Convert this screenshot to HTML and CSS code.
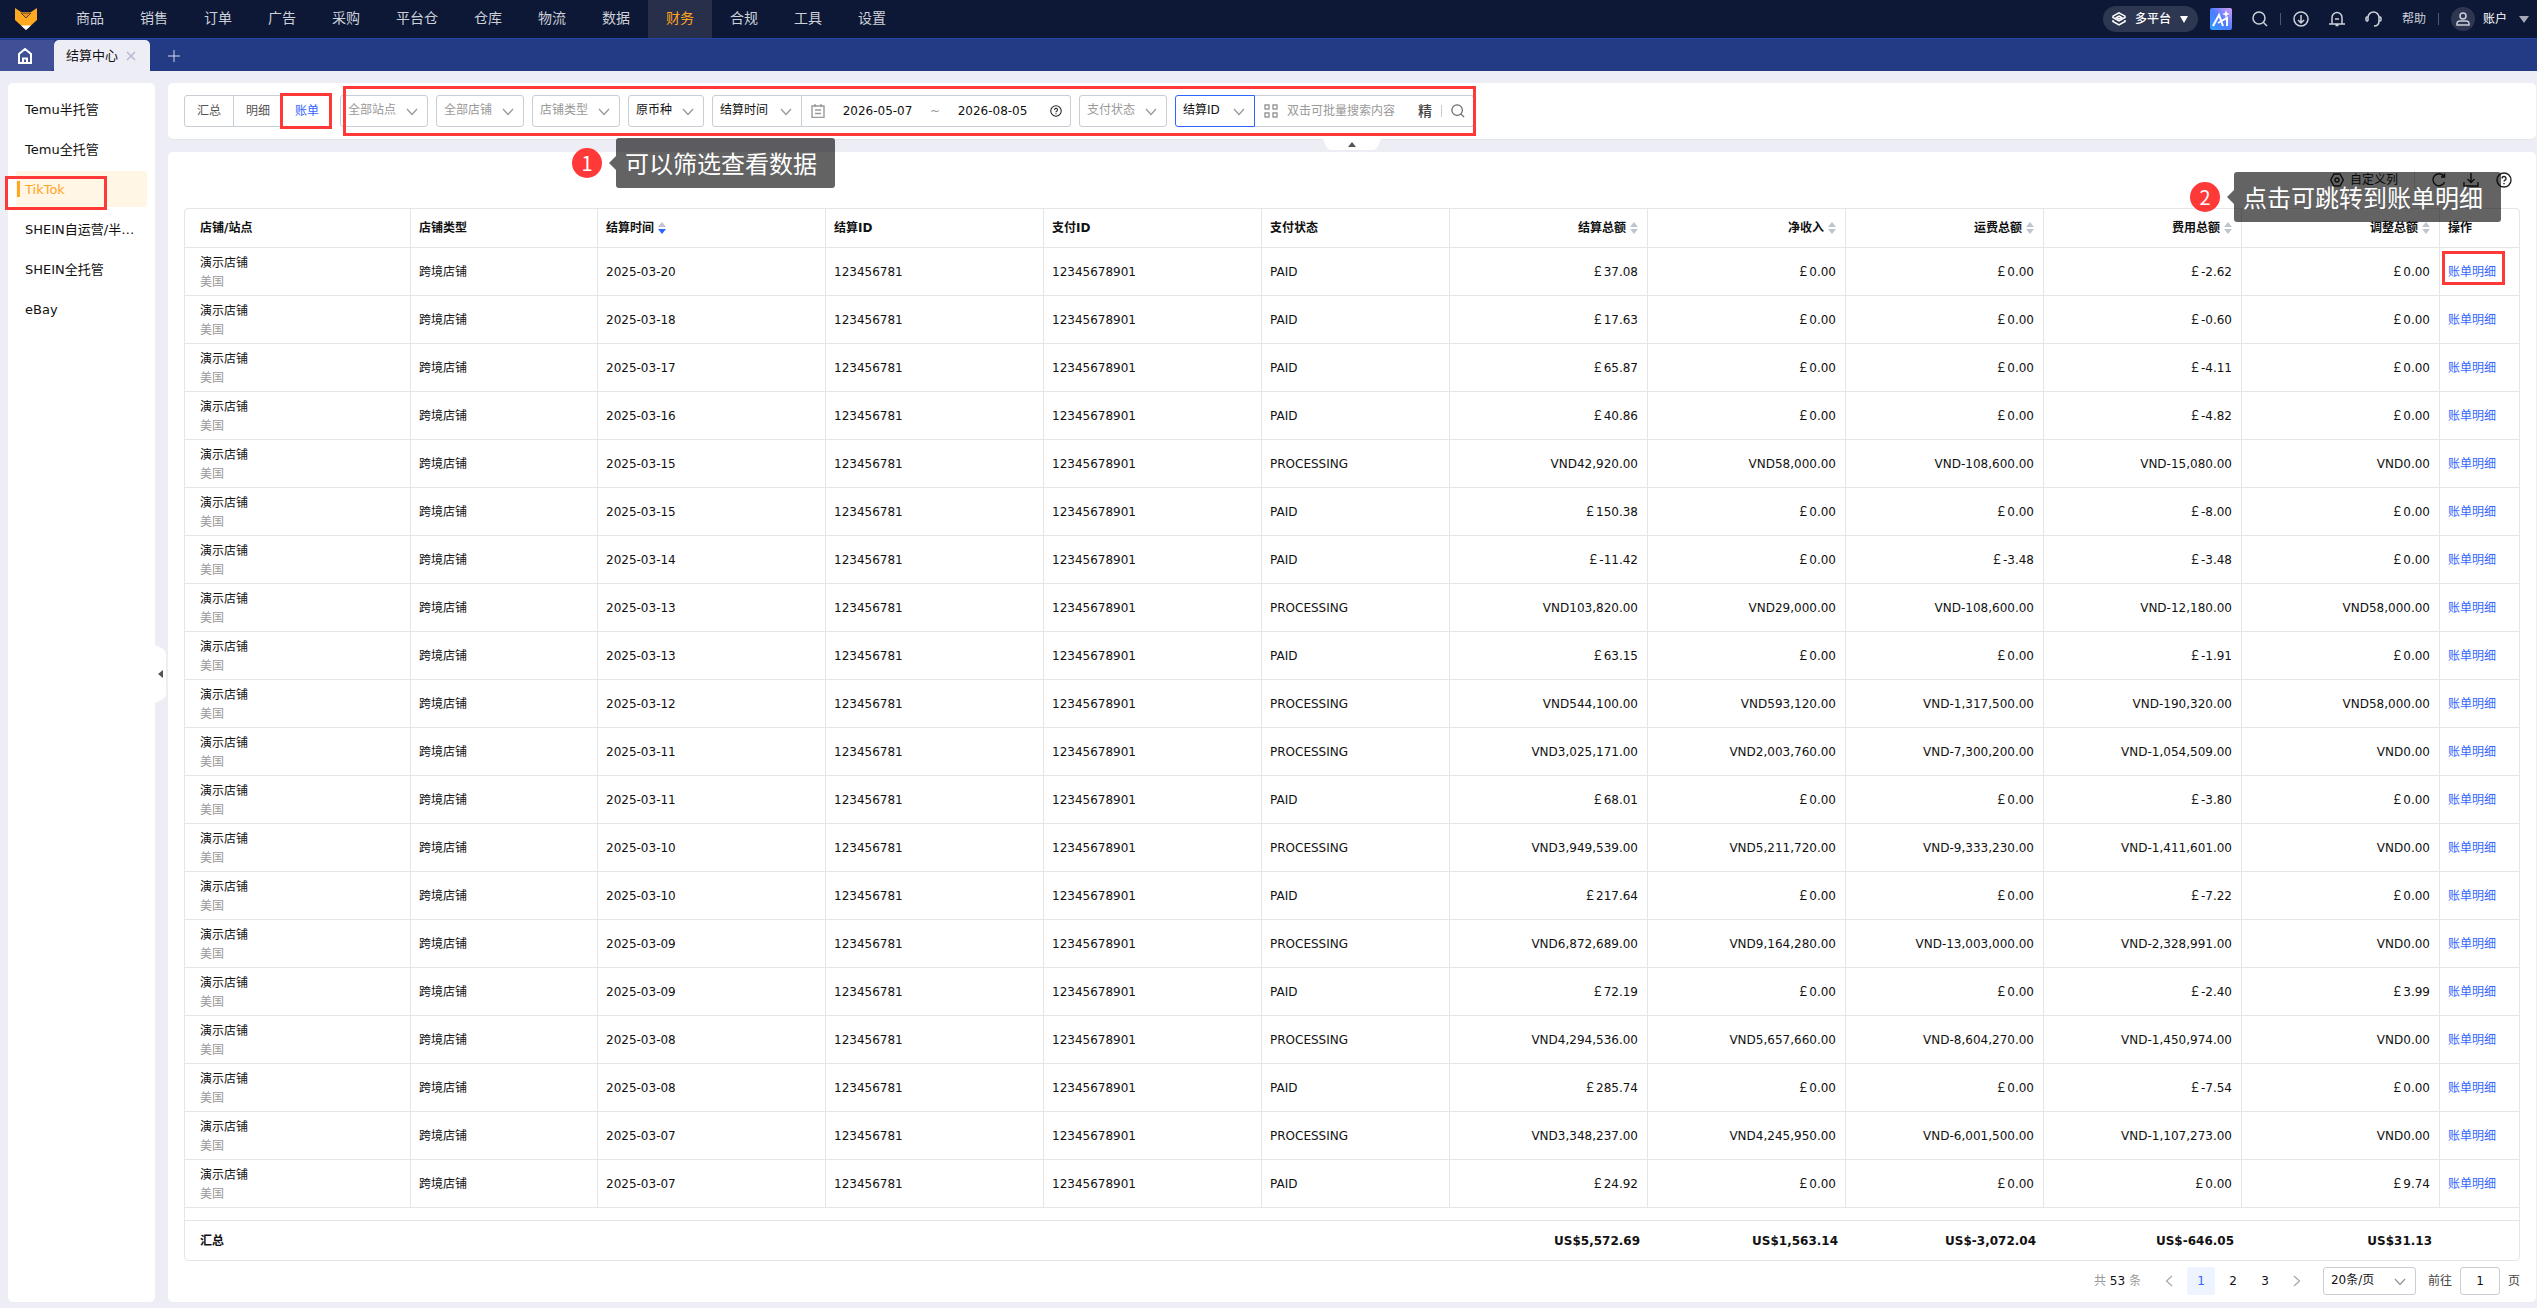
FILE: index.html
```html
<!DOCTYPE html>
<html lang="zh-CN">
<head>
    <meta charset="UTF-8">
    <meta name="viewport" content="width=device-width, initial-scale=1.0">
    <title>结算中心</title>
    <link rel="stylesheet" href="styles.css">
</head>
<body>
    <svg class="sprite" aria-hidden="true">
        <symbol id="chevron" viewBox="0 0 12 12"><path d="M1 3l5 5.500L11 3"/></symbol>
        <symbol id="search" viewBox="0 0 16 16"><circle cx="7" cy="7" r="6"/><path d="M11.500 11.500L15 15"/></symbol>
        <symbol id="help" viewBox="0 0 16 16"><circle cx="8" cy="8" r="7"/><path d="M6 6.500a2 2 0 1 1 2.800 1.800c-.6.300-.8.600-.8 1.200M8 11v1.300"/></symbol>
    </svg>

    <header class="topbar">
        <a class="logo" href="#" aria-label="首页">
            <svg width="22" height="22" viewBox="0 0 22 22">
                <path d="M0 0l6 4h10l6-4v12L11 22 0 12z" fill="#ffa920"/>
                <path d="M6 17.500h10L11 22z" fill="#fff"/>
                <path d="M6 5l5 5 5-5z" fill="#e8941a" stroke="#5b4426" stroke-width="1"/>
            </svg>
        </a>
        <nav class="nav">
            <a href="#">商品</a>
            <a href="#">销售</a>
            <a href="#">订单</a>
            <a href="#">广告</a>
            <a href="#">采购</a>
            <a href="#">平台仓</a>
            <a href="#">仓库</a>
            <a href="#">物流</a>
            <a href="#">数据</a>
            <a href="#" class="active">财务</a>
            <a href="#">合规</a>
            <a href="#">工具</a>
            <a href="#">设置</a>
        </nav>
        <div class="tools">
            <button class="platform">
                <svg class="line" width="14" height="14" viewBox="0 0 14 14"><path d="M7 .8l6 3.400v1.300L7 9 1 5.500V4.200zM7 4l2.500 1.400L7 6.800 4.500 5.400zM1 8v1.500L7 13l6-3.500V8"/></svg>
                多平台
                <i class="caret"></i>
            </button>
            <button class="ai" aria-label="AI">
                <svg width="22" height="22" viewBox="0 0 22 22">
                    <defs>
                        <linearGradient id="aiBg" x1="0" y1="1" x2="1" y2="0">
                            <stop offset="0" stop-color="#2fa0ff"/>
                            <stop offset=".5" stop-color="#4f7bff"/>
                            <stop offset="1" stop-color="#d99cf5"/>
                        </linearGradient>
                    </defs>
                    <rect width="22" height="22" rx="2" fill="url(#aiBg)"/>
                    <path d="M3 18L9 7l4 11M8 15l9-5v8" fill="none" stroke="#fff" stroke-width="2"/>
                    <path d="M16 2l1 3 3 1-3 1-1 3-1-3-3-1 3-1z" fill="#fff"/>
                </svg>
            </button>
            <button aria-label="搜索"><svg class="line" width="16" height="16"><use href="#search"/></svg></button>
            <i class="split"></i>
            <button aria-label="下载"><svg class="line" width="16" height="16" viewBox="0 0 16 16"><circle cx="8" cy="8" r="7"/><path d="M8 4v8M5 9l3 3 3-3"/></svg></button>
            <button aria-label="通知"><svg class="line" width="16" height="16" viewBox="0 0 16 16"><path d="M0 13h16M3 13V6.500a5 5 0 0 1 10 0V13M6 8h4M6.500 14.500h3"/></svg></button>
            <button aria-label="客服"><svg class="line" width="17" height="16" viewBox="0 0 17 16"><path d="M3 10V6.500a5.500 5.500 0 0 1 11 0V10c0 3-2 5-5 5M3 6H2a1 1 0 0 0-1 1v2a1 1 0 0 0 1 1h1M14 6h1a1 1 0 0 1 1 1v2a1 1 0 0 1-1 1h-1"/></svg></button>
            <a href="#" class="help-link">帮助</a>
            <i class="split"></i>
            <button class="account">
                <span class="avatar"><svg class="line" width="14" height="14" viewBox="0 0 14 14"><circle cx="7" cy="4" r="3"/><path d="M1 13v-1.500a2.500 2.500 0 0 1 2.500-2.500h7a2.500 2.500 0 0 1 2.500 2.500V13z"/></svg></span>
                账户
                <i class="caret"></i>
            </button>
        </div>
    </header>

    <div class="tabbar">
        <button class="home" aria-label="主页"><svg width="14" height="16" viewBox="0 0 14 16"><path d="M1 15V6l6-5 6 5v9zM5 15v-4.500h4V15"/></svg></button>
        <div class="tab">结算中心
            <button aria-label="关闭"><svg width="10" height="10" viewBox="0 0 10 10"><path d="M1 1l8 8M9 1L1 9"/></svg></button>
        </div>
        <button class="add" aria-label="新增"><svg width="12" height="12" viewBox="0 0 12 12"><path d="M6 0v12M0 6h12"/></svg></button>
    </div>

    <div class="layout">
        <aside class="sidebar">
            <a href="#">Temu半托管</a>
            <a href="#">Temu全托管</a>
            <a href="#" class="active">TikTok<span class="mark mark-menu"></span></a>
            <a href="#">SHEIN自运营/半托管</a>
            <a href="#">SHEIN全托管</a>
            <a href="#">eBay</a>
            <button class="fold-side" aria-label="收起菜单">
                <svg width="11" height="58" viewBox="0 0 11 58"><path d="M0 0l8 4q3 2 3 5v40q0 3-3 5l-8 4z" fill="#fff"/><path d="M8 25v8l-5-4z" fill="#555"/></svg>
            </button>
        </aside>

        <main class="content">
            <section class="card filter-card">
                <div class="segment">
                    <button>汇总</button>
                    <button>明细</button>
                    <button class="active">账单<span class="mark mark-segment"></span></button>
                </div>
                <div class="filters">
                    <div class="select"><select class="empty" aria-label="站点"><option>全部站点</option></select><svg><use href="#chevron"/></svg></div>
                    <div class="select"><select class="empty" aria-label="店铺"><option>全部店铺</option></select><svg><use href="#chevron"/></svg></div>
                    <div class="select"><select class="empty" aria-label="店铺类型"><option>店铺类型</option></select><svg><use href="#chevron"/></svg></div>
                    <div class="select currency"><select aria-label="币种"><option>原币种</option></select><svg><use href="#chevron"/></svg></div>
                    <div class="group">
                        <div class="select time-type"><select aria-label="时间类型"><option>结算时间</option></select><svg><use href="#chevron"/></svg></div>
                        <div class="field dates">
                            <svg class="icon" width="14" height="14" viewBox="0 0 14 14"><path d="M1 2h12v11.400H1zM4 0v3M10 0v3M4 6h6M4 9.500h6"/></svg>
                            <input type="text" value="2026-05-07" aria-label="开始日期">
                            <span>~</span>
                            <input type="text" value="2026-08-05" aria-label="结束日期">
                            <svg class="icon dark" width="12" height="12"><use href="#help"/></svg>
                        </div>
                    </div>
                    <div class="select"><select class="empty" aria-label="支付状态"><option>支付状态</option></select><svg><use href="#chevron"/></svg></div>
                    <div class="group">
                        <div class="select id-type"><select aria-label="搜索类型"><option>结算ID</option></select><svg><use href="#chevron"/></svg></div>
                        <div class="field search">
                            <svg class="icon" width="14" height="14" viewBox="0 0 14 14"><path d="M1 1h4v4H1zM9 1h4v4H9zM1 9h4v4H1zM9 9h4v4H9z"/></svg>
                            <input type="text" placeholder="双击可批量搜索内容" aria-label="搜索内容">
                            <button class="exact">精</button>
                            <i></i>
                            <button aria-label="搜索"><svg class="icon gray" width="14" height="14"><use href="#search"/></svg></button>
                        </div>
                    </div>
                    <span class="mark mark-filters"></span>
                    <div class="note note-filter"><b>1</b><p>可以筛选查看数据</p></div>
                </div>
                <button class="fold-top" aria-label="收起筛选">
                    <svg width="58" height="12" viewBox="0 0 58 12"><path d="M0 0l3 7q2 4 5 4h42q3 0 5-4l3-7z" fill="#fff"/><path d="M25 8h8l-4-5z" fill="#555"/></svg>
                </button>
            </section>

            <section class="card table-card">
                <div class="toolbar">
                    <button class="columns"><svg class="icon dark" width="14" height="14" viewBox="0 0 14 14"><path d="M4 1h6l3.300 6L10 13H4L.7 7z"/><circle cx="7" cy="7" r="2"/></svg>自定义列</button>
                    <button aria-label="刷新"><svg class="icon dark" width="14" height="14" viewBox="0 0 14 14"><path d="M12.500 9A6 6 0 1 1 12 3.500M12.500 .5v3.500H9"/></svg></button>
                    <button aria-label="导出"><svg class="icon dark" width="16" height="16" viewBox="0 0 16 16"><path d="M8 1v9M4.500 7L8 10.500 11.500 7M1 10v4h14v-4"/></svg></button>
                    <button aria-label="帮助"><svg class="icon dark" width="16" height="16"><use href="#help"/></svg></button>
                    <div class="note note-detail"><b>2</b><p>点击可跳转到账单明细</p></div>
                </div>

                <div class="table-wrap">
                    <table>
                        <colgroup>
                            <col class="w-shop"><col class="w-type"><col class="w-time"><col class="w-id"><col class="w-id"><col class="w-status">
                            <col class="w-num"><col class="w-num"><col class="w-num"><col class="w-num"><col class="w-num"><col class="w-op">
                        </colgroup>
                        <thead>
                            <tr>
                                <th>店铺/站点</th>
                                <th>店铺类型</th>
                                <th>结算时间<i class="sort desc"></i></th>
                                <th>结算ID</th>
                                <th>支付ID</th>
                                <th>支付状态</th>
                                <th class="num">结算总额<i class="sort"></i></th>
                                <th class="num">净收入<i class="sort"></i></th>
                                <th class="num">运费总额<i class="sort"></i></th>
                                <th class="num">费用总额<i class="sort"></i></th>
                                <th class="num">调整总额<i class="sort"></i></th>
                                <th>操作</th>
                            </tr>
                        </thead>
                        <tbody id="rows"></tbody>
                        <tfoot>
                            <tr class="spacer"><td colspan="12"></td></tr>
                            <tr class="total">
                                <td colspan="6">汇总</td>
                                <td class="num">US$5,572.69</td>
                                <td class="num">US$1,563.14</td>
                                <td class="num">US$-3,072.04</td>
                                <td class="num">US$-646.05</td>
                                <td class="num">US$31.13</td>
                                <td></td>
                            </tr>
                        </tfoot>
                    </table>
                </div>

                <div class="pager">
                    <span class="count">共 <b>53</b> 条</span>
                    <button class="arrow prev" aria-label="上一页"><svg width="12" height="12"><use href="#chevron"/></svg></button>
                    <button class="active">1</button>
                    <button>2</button>
                    <button>3</button>
                    <button class="arrow next" aria-label="下一页"><svg width="12" height="12"><use href="#chevron"/></svg></button>
                    <div class="select size"><select aria-label="每页条数"><option>20条/页</option></select><svg><use href="#chevron"/></svg></div>
                    <label class="jump">前往 <input type="text" value="1"> 页</label>
                </div>
            </section>
        </main>
    </div>

    <script>
        // date, status, settlement, net income, shipping, fee, adjustment
        const rows = [
            ['2025-03-20', 'PAID', '￡37.08', '￡0.00', '￡0.00', '￡-2.62', '￡0.00'],
            ['2025-03-18', 'PAID', '￡17.63', '￡0.00', '￡0.00', '￡-0.60', '￡0.00'],
            ['2025-03-17', 'PAID', '￡65.87', '￡0.00', '￡0.00', '￡-4.11', '￡0.00'],
            ['2025-03-16', 'PAID', '￡40.86', '￡0.00', '￡0.00', '￡-4.82', '￡0.00'],
            ['2025-03-15', 'PROCESSING', 'VND42,920.00', 'VND58,000.00', 'VND-108,600.00', 'VND-15,080.00', 'VND0.00'],
            ['2025-03-15', 'PAID', '￡150.38', '￡0.00', '￡0.00', '￡-8.00', '￡0.00'],
            ['2025-03-14', 'PAID', '￡-11.42', '￡0.00', '￡-3.48', '￡-3.48', '￡0.00'],
            ['2025-03-13', 'PROCESSING', 'VND103,820.00', 'VND29,000.00', 'VND-108,600.00', 'VND-12,180.00', 'VND58,000.00'],
            ['2025-03-13', 'PAID', '￡63.15', '￡0.00', '￡0.00', '￡-1.91', '￡0.00'],
            ['2025-03-12', 'PROCESSING', 'VND544,100.00', 'VND593,120.00', 'VND-1,317,500.00', 'VND-190,320.00', 'VND58,000.00'],
            ['2025-03-11', 'PROCESSING', 'VND3,025,171.00', 'VND2,003,760.00', 'VND-7,300,200.00', 'VND-1,054,509.00', 'VND0.00'],
            ['2025-03-11', 'PAID', '￡68.01', '￡0.00', '￡0.00', '￡-3.80', '￡0.00'],
            ['2025-03-10', 'PROCESSING', 'VND3,949,539.00', 'VND5,211,720.00', 'VND-9,333,230.00', 'VND-1,411,601.00', 'VND0.00'],
            ['2025-03-10', 'PAID', '￡217.64', '￡0.00', '￡0.00', '￡-7.22', '￡0.00'],
            ['2025-03-09', 'PROCESSING', 'VND6,872,689.00', 'VND9,164,280.00', 'VND-13,003,000.00', 'VND-2,328,991.00', 'VND0.00'],
            ['2025-03-09', 'PAID', '￡72.19', '￡0.00', '￡0.00', '￡-2.40', '￡3.99'],
            ['2025-03-08', 'PROCESSING', 'VND4,294,536.00', 'VND5,657,660.00', 'VND-8,604,270.00', 'VND-1,450,974.00', 'VND0.00'],
            ['2025-03-08', 'PAID', '￡285.74', '￡0.00', '￡0.00', '￡-7.54', '￡0.00'],
            ['2025-03-07', 'PROCESSING', 'VND3,348,237.00', 'VND4,245,950.00', 'VND-6,001,500.00', 'VND-1,107,273.00', 'VND0.00'],
            ['2025-03-07', 'PAID', '￡24.92', '￡0.00', '￡0.00', '￡0.00', '￡9.74']
        ];

        document.getElementById('rows').innerHTML = rows.map((row, i) => {
            const [date, status, ...amounts] = row;
            return `<tr>
                <td class="shop">演示店铺<small>美国</small></td>
                <td>跨境店铺</td>
                <td>${date}</td>
                <td>123456781</td>
                <td>12345678901</td>
                <td>${status}</td>
                ${amounts.map(a => `<td class="num">${a}</td>`).join('')}
                <td class="op"><a href="#">账单明细${i === 0 ? '<span class="mark mark-detail"></span>' : ''}</a></td>
            </tr>`;
        }).join('');
    </script>
</body>
</html>
```
FILE: styles.css
```css
* {
    box-sizing: border-box;
}
body {
    margin: 0;
    min-height: 100vh;
    display: flex;
    flex-direction: column;
    background: #ededf6;
    color: #111;
    font-family: "DejaVu Sans", "Noto Sans CJK SC", sans-serif;
    font-size: 12px;
    line-height: 18px;
}
a {
    color: inherit;
    text-decoration: none;
}
button, input, select {
    font: inherit;
    color: inherit;
    background: none;
    border: 0;
    padding: 0;
    margin: 0;
    outline: none;
}
button {
    cursor: pointer;
}
svg {
    display: block;
    flex: none;
}
.sprite {
    display: none;
}

/* top bar */
.topbar {
    display: flex;
    height: 39px;
    background: #0c1836;
    border-bottom: 1px solid #2645a6;
    color: #ced1d9;
}
.logo {
    width: 58px;
    padding: 8px 0 0 15px;
}
.nav {
    display: flex;
}
.nav a {
    padding: 0 18px;
    font-size: 14px;
    line-height: 36px;
}
.nav a.active {
    background: #272f4b;
    color: #ffa51f;
}
.tools {
    margin-left: auto;
    padding-right: 8px;
    display: flex;
    align-items: center;
    gap: 20px;
}
.line {
    fill: none;
    stroke: currentColor;
    stroke-width: 1.5;
}
.platform {
    display: flex;
    align-items: center;
    gap: 9px;
    height: 26px;
    padding: 0 10px 0 9px;
    margin-right: -8px;
    border-radius: 13px;
    background: #2e3751;
    color: #fff;
    font-weight: 500;
}
.caret {
    border: 4px solid transparent;
    border-top: 7px solid currentColor;
    border-bottom: 0;
}
.split {
    width: 1px;
    height: 12px;
    margin: 0 -8px;
    background: #4f586f;
}
.account {
    display: flex;
    align-items: center;
    gap: 8px;
    color: #fff;
}
.account .caret {
    border-width: 7px 5px 0;
    margin-left: 4px;
    color: #a3a8b4;
}
.avatar {
    display: flex;
    align-items: center;
    justify-content: center;
    width: 24px;
    height: 24px;
    border-radius: 50%;
    background: #2e3751;
    color: #ced1d9;
}

/* page tabs */
.tabbar {
    display: flex;
    height: 32px;
    padding-top: 1px;
    background: #233a85;
}
.tabbar svg {
    fill: none;
    stroke: currentColor;
}
.home {
    display: flex;
    justify-content: center;
    align-items: center;
    width: 54px;
    padding-right: 4px;
    border-radius: 0 0 4px 0;
    background: #3f5097;
    color: #fff;
    stroke-width: 2;
}
.tab {
    display: flex;
    align-items: center;
    gap: 8px;
    width: 96px;
    padding-left: 12px;
    border-radius: 5px 5px 0 0;
    background: #ededf6;
    font-size: 13px;
}
.tab button {
    color: #b4bbd0;
    stroke-width: 1.5;
}
.add {
    padding: 0 18px;
    color: #d5daea;
}

/* sidebar */
.layout {
    flex: 1;
    display: flex;
    gap: 13px;
    padding: 12px 1px 6px 8px;
}
.sidebar {
    position: relative;
    width: 147px;
    padding: 8px;
    border-radius: 5px;
    background: #fff;
    font-size: 13px;
}
.sidebar a {
    position: relative;
    display: block;
    height: 36px;
    margin-bottom: 4px;
    padding: 0 9px;
    line-height: 37px;
    white-space: nowrap;
    overflow: hidden;
    text-overflow: ellipsis;
}
.sidebar a.active {
    overflow: visible;
    border-radius: 3px;
    background: #fff6e5;
    color: #ffa51f;
}
.sidebar a.active::before {
    content: "";
    position: absolute;
    left: 1px;
    top: 10px;
    width: 3px;
    height: 16px;
    background: #ffa51f;
}
.fold-side {
    position: absolute;
    left: 100%;
    top: 50%;
    margin-top: -48px;
}

/* content cards */
.content {
    flex: 1;
    min-width: 0;
    display: flex;
    flex-direction: column;
    gap: 13px;
}
.card {
    position: relative;
    padding: 0 16px;
    border-radius: 5px;
    background: #fff;
}
.filter-card {
    display: flex;
    align-items: center;
    gap: 8px;
    height: 56px;
    box-shadow: 0 1px 0 #e3e4eb;
    z-index: 1;
}
.fold-top {
    position: absolute;
    left: 50%;
    top: 100%;
    margin-left: -29px;
}
.segment {
    display: flex;
    height: 32px;
    border: 1px solid #c9cdd4;
    border-radius: 3px;
    color: #555;
}
.segment button {
    position: relative;
    width: 49px;
    border-right: 1px solid #c9cdd4;
}
.segment button.active {
    width: 48px;
    border-right: 0;
    box-shadow: -1px 0 0 #3366ff;
    color: #3366ff;
}
.filters {
    position: relative;
    display: flex;
    gap: 8px;
}
.group {
    display: flex;
}
.select {
    position: relative;
    width: 88px;
    height: 32px;
}
.select select {
    appearance: none;
    width: 100%;
    height: 100%;
    padding: 0 24px 2px 7px;
    border: 1px solid #c9cdd4;
    border-radius: 3px;
}
.select select.empty {
    color: #999;
}
.select svg {
    position: absolute;
    right: 10px;
    top: 50%;
    width: 12px;
    height: 12px;
    margin-top: -5px;
    fill: none;
    stroke: #999;
    stroke-width: 1.3;
    pointer-events: none;
}
.currency {
    width: 76px;
}
.time-type {
    width: 90px;
}
.group .select select {
    border-radius: 3px 0 0 3px;
}
.id-type {
    width: 80px;
}
.group .id-type select {
    border-color: #2d66ff;
}
.field {
    display: flex;
    align-items: center;
    height: 32px;
    border: 1px solid #c9cdd4;
    border-left: 0;
    border-radius: 0 3px 3px 0;
}
.icon {
    fill: none;
    stroke: #999;
    stroke-width: 1.4;
}
.icon.dark {
    stroke: #222;
}
.icon.gray {
    stroke: #666;
}
.dates {
    width: 269px;
    padding: 0 8px 0 9px;
}
.dates input {
    width: 105px;
    text-align: center;
}
.dates span {
    width: 10px;
    color: #999;
}
.dates .dark {
    margin-left: auto;
}
.search {
    width: 219px;
    padding: 0 8px 0 9px;
}
.search input {
    flex: 1;
    min-width: 0;
    padding-left: 9px;
}
.search input::placeholder {
    color: #999;
}
.search .exact {
    font-size: 14px;
    font-weight: 500;
    color: #444;
}
.search i {
    width: 1px;
    height: 12px;
    margin: 0 9px;
    background: #ccc;
}

/* table */
.table-card {
    flex: 1;
}
.toolbar {
    position: relative;
    display: flex;
    justify-content: flex-end;
    align-items: center;
    gap: 17px;
    height: 56px;
    padding-right: 8px;
}
.columns {
    display: flex;
    gap: 6px;
    padding-right: 16px;
    border-right: 1px solid #ddd;
}
.columns svg {
    margin-top: 2px;
}
.table-wrap {
    border: 1px solid #e3e5e9;
    border-radius: 4px;
}
table {
    width: 100%;
    table-layout: fixed;
    border-collapse: separate;
    border-spacing: 0;
}
.w-shop { width: 226px; }
.w-type { width: 187px; }
.w-time { width: 228px; }
.w-id { width: 218px; }
.w-status { width: 188px; }
.w-num { width: 198px; }
.w-op { width: 79px; }
th, td {
    padding: 0 8px;
    border-right: 1px solid #e3e5e9;
    border-bottom: 1px solid #e3e5e9;
    text-align: left;
    white-space: nowrap;
}
th:first-child, td:first-child {
    padding-left: 15px;
}
th:last-child, td:last-child {
    border-right: 0;
}
th {
    height: 39px;
}
td {
    height: 48px;
}
th.num, td.num {
    padding-right: 9px;
    text-align: right;
}
td.shop {
    padding-top: 2px;
    line-height: 19px;
}
.shop small {
    display: block;
    font-size: 12px;
    color: #999;
}
.op {
    color: #3366ff;
}
.op a {
    position: relative;
}
.sort {
    display: inline-block;
    margin-left: 4px;
    vertical-align: -2px;
}
.sort::before, .sort::after {
    content: "";
    display: block;
    border: 4px solid transparent;
}
.sort::before {
    border-top: 0;
    border-bottom: 5px solid #c0c4cc;
    margin-bottom: 2px;
}
.sort::after {
    border-bottom: 0;
    border-top: 5px solid #c0c4cc;
}
.sort.desc::after {
    border-top-color: #2d66ff;
}
.spacer td {
    height: 13px;
    padding: 0;
}
.total td, .total td.num {
    height: 39px;
    padding-right: 8px;
    border: 0;
    font-weight: bold;
}

/* pagination */
.pager {
    display: flex;
    justify-content: flex-end;
    align-items: center;
    height: 28px;
    margin: 6px 0;
}
.pager > button {
    width: 28px;
    height: 28px;
    margin-right: 4px;
    border-radius: 3px;
}
.pager > button.active {
    background: #edf4ff;
    color: #3366ff;
}
.count {
    margin-right: 14px;
    color: #999;
}
.count b {
    font-weight: normal;
    color: #111;
}
.arrow svg {
    margin: 0 auto;
    fill: none;
    stroke: #aaa;
    stroke-width: 1.3;
}
.prev svg {
    transform: rotate(90deg);
}
.next svg {
    transform: rotate(-90deg);
}
.size {
    width: 93px;
    height: 28px;
    margin: 0 12px 0 8px;
}
.jump {
    display: flex;
    align-items: center;
    gap: 8px;
    color: #444;
}
.jump input {
    width: 40px;
    height: 28px;
    border: 1px solid #c9cdd4;
    border-radius: 3px;
    color: #111;
    text-align: center;
}

/* guide marks and notes */
.mark {
    position: absolute;
    border: 3px solid #ff3838;
    pointer-events: none;
}
.mark-menu {
    inset: 5px 40px -3px -11px;
}
.mark-segment {
    inset: -3px -1px -3px -3px;
}
.mark-filters {
    inset: -9px -2px -9px 3px;
}
.mark-detail {
    inset: -14px -9px -6px -6px;
}
.note {
    position: absolute;
    display: flex;
    align-items: center;
    gap: 14px;
    color: #fff;
    z-index: 2;
}
.note b {
    width: 30px;
    height: 30px;
    border-radius: 50%;
    background: #ff3838;
    font: 20px/30px "Noto Sans CJK SC", sans-serif;
    text-align: center;
}
.note p {
    position: relative;
    height: 50px;
    margin: 0;
    padding: 0 18px 0 9px;
    border-radius: 3px;
    background: rgba(0, 0, 0, 0.61);
    font: 24px/50px "Noto Sans CJK SC", sans-serif;
    white-space: nowrap;
}
.note p::before {
    content: "";
    position: absolute;
    right: 100%;
    top: 18px;
    border: 7px solid transparent;
    border-left: 0;
    border-right-color: rgba(0, 0, 0, 0.61);
}
.note-filter {
    left: 232px;
    top: 43px;
}
.note-detail {
    right: 19px;
    top: 20px;
}
```
